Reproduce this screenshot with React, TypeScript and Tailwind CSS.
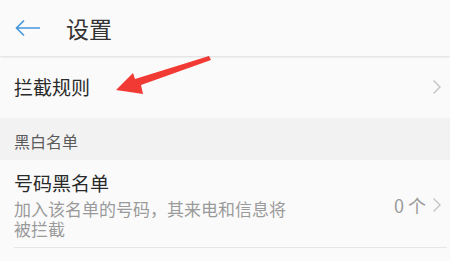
const font = { fontFamily: '"Noto Sans CJK SC", "Noto Sans", sans-serif' };

function Chevron() {
  return (
    <svg width="10" height="16" viewBox="0 0 10 16" className="shrink-0">
      <polyline points="1.5,1.5 8,8 1.5,14.5" fill="none" stroke="#c4c4c4" strokeWidth="1.4" />
    </svg>
  );
}

export default function App() {
  return (
    <div className="relative h-[261px] w-[450px] overflow-hidden bg-[#fafafa]" style={font}>
      <header className="relative z-10 flex h-[56px] items-center bg-[#fafafa] shadow-[0_1px_2px_rgba(0,0,0,0.12)]">
        <svg width="26" height="18" viewBox="0 0 26 18" className="ml-[15px]">
          <path d="M1.5 9 H25 M9 1.5 L1.5 9 L9 16.5" fill="none" stroke="#4596dd" strokeWidth="1.6" strokeLinejoin="miter" />
        </svg>
        <h1 className="ml-[25px] text-[23px] leading-none text-[#333]">设置</h1>
      </header>

      <div className="flex h-[62px] items-center justify-between pl-[14px] pr-[8px]">
        <span className="text-[19px] text-[#2a2a2a]">拦截规则</span>
        <Chevron />
      </div>

      <div className="flex h-[42px] items-center bg-[#f2f2f2] pl-[14px] pt-[4px]">
        <span className="text-[16px] text-[#5a5a5a]">黑白名单</span>
      </div>

      <div className="flex items-center justify-between pl-[14px] pr-[8px] pt-[11px] pb-[8px]">
        <div className="w-[280px]">
          <div className="text-[19px] leading-[24px] text-[#2a2a2a]">号码黑名单</div>
          <div className="mt-[4px] text-[17px] leading-[20px] text-[#9a9a9a]">加入该名单的号码，其来电和信息将被拦截</div>
        </div>
        <div className="flex items-center gap-[6px]">
          <span className="text-[18px] text-[#9a9a9a]">0 个</span>
          <Chevron />
        </div>
      </div>
      <div className="ml-[14px] mr-[3px] h-px bg-[#e6e6e6]" />

      <div className="pl-[14px] pt-[10px] text-[19px] leading-[24px] text-[#ececec]">号码白名单</div>

      <svg className="pointer-events-none absolute left-0 top-0" width="450" height="261">
        <polygon points="116,90 133,73 135,79 209,56 211,60 141,85 143,94" fill="#f23a35" />
      </svg>
    </div>
  );
}
